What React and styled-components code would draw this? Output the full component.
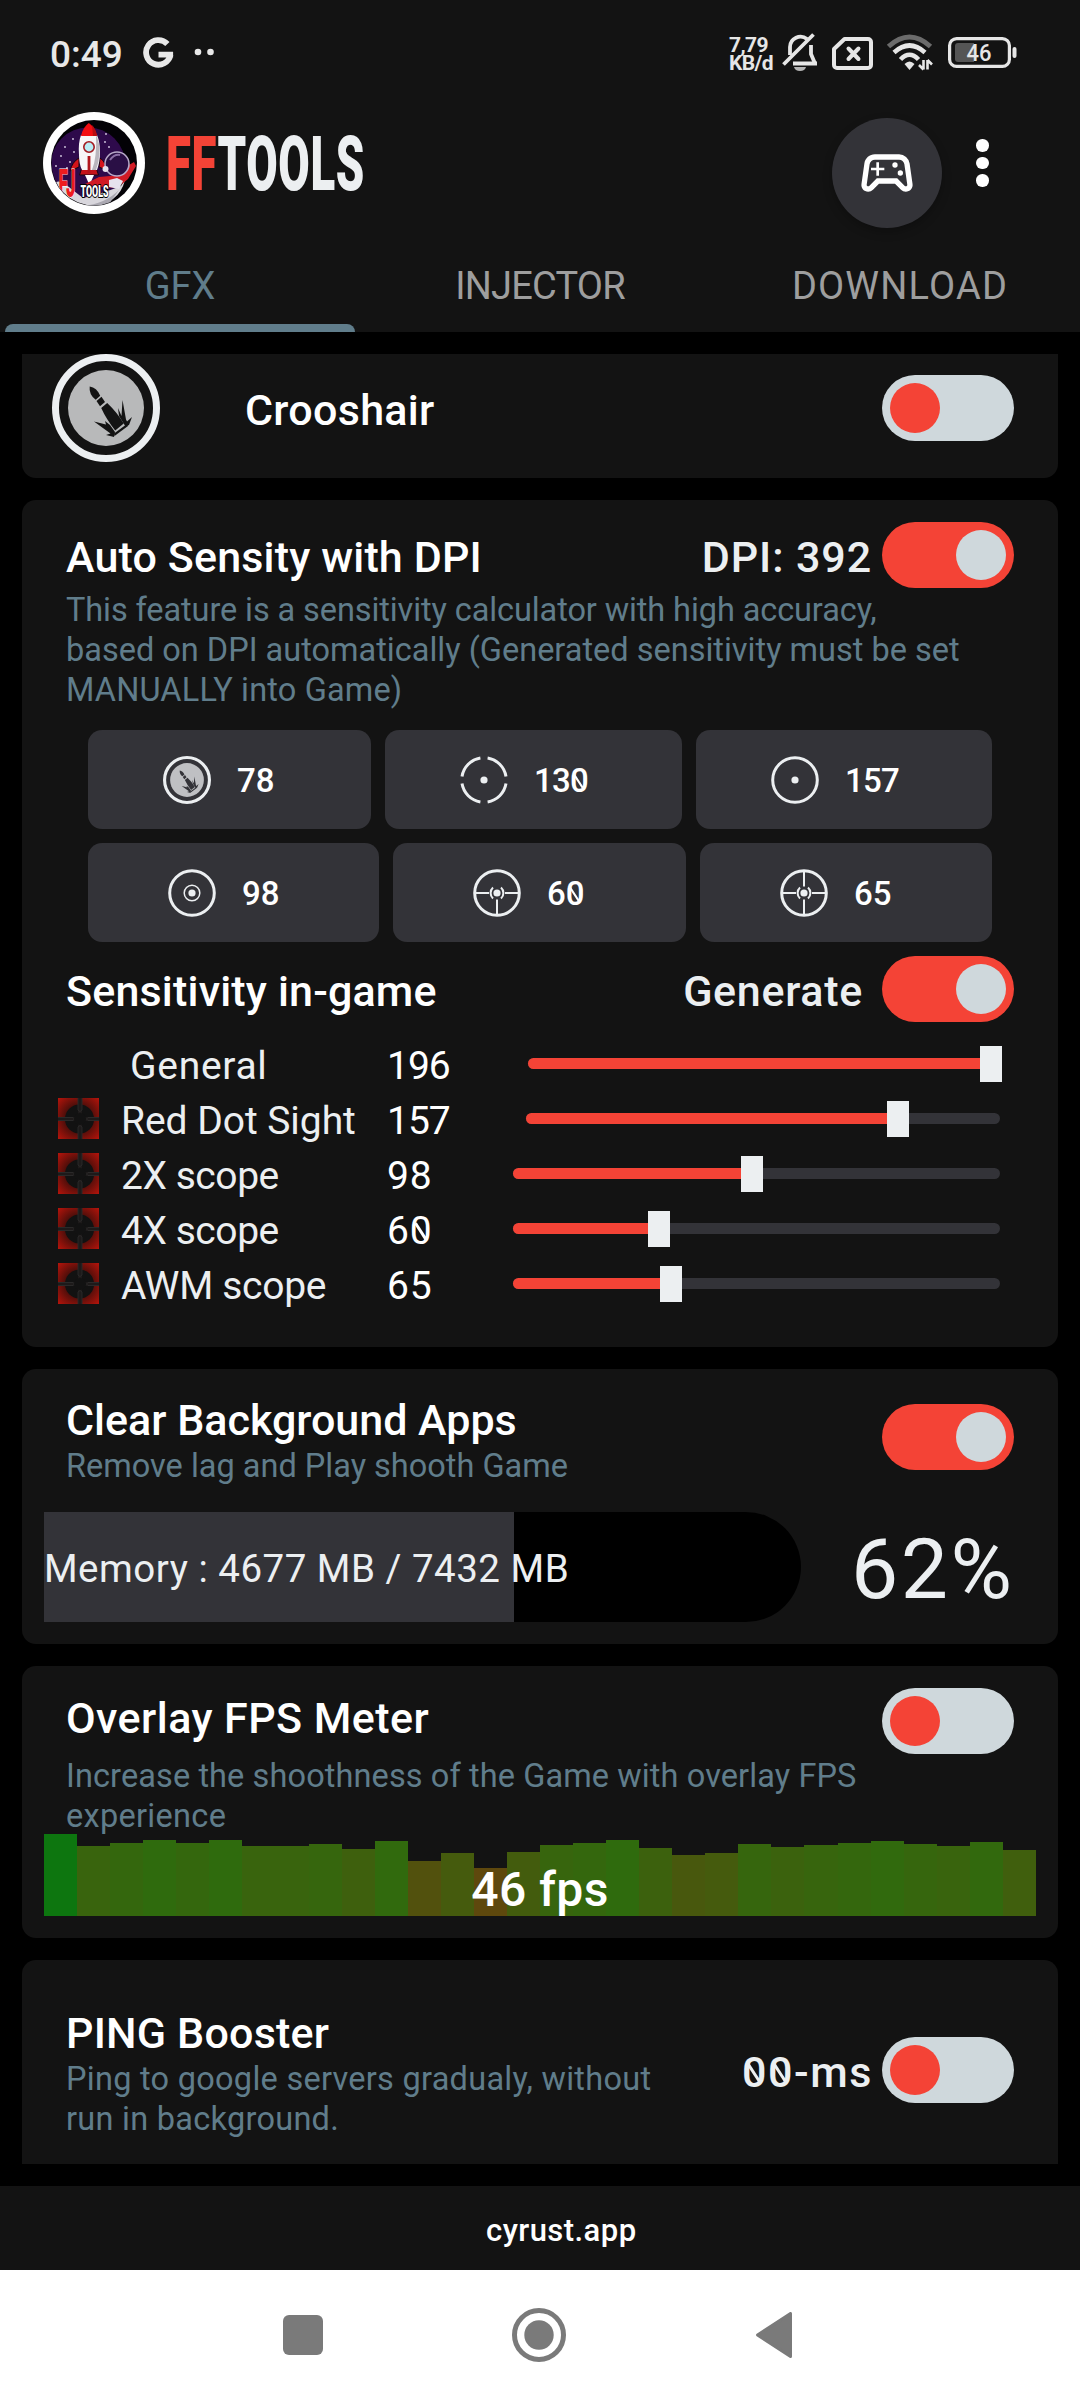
import React from "react";
import styled, { createGlobalStyle, css } from "styled-components";
import { MdOutlineSportsEsports } from "react-icons/md";

const c = {
  panel: "#131313",
  chip: "#333338",
  accent: "#f44336",
  light: "#cfd8dc",
  text: "#eceff1",
  muted: "#607d8b",
};

const Global = createGlobalStyle`
  * { box-sizing: border-box; }
  body { margin: 0; background: #000; font-family: Roboto, "Liberation Sans", sans-serif; }
  svg { display: block; flex: none; }
`;

const Screen = styled.div`
  width: 1080px;
  height: 2400px;
  display: flex;
  flex-direction: column;
  background: #000;
  overflow: hidden;
`;

/* ---------- text ---------- */
const Text = styled.span`
  display: block;
  white-space: pre;
  font-size: ${(p) => p.$size || 43}px;
  font-weight: ${(p) => p.$weight || 400};
  line-height: ${(p) => p.$line || 50}px;
  letter-spacing: ${(p) => p.$track || 0}px;
  color: ${(p) => p.$color || "#fff"};
`;
const Zero = styled.span`
  position: relative;
  display: inline-block;
  &::after {
    content: "";
    position: absolute;
    left: 50%;
    top: 50%;
    width: 0.075em;
    height: 0.52em;
    margin-left: ${(p) => -(p.$track || 0) / 2}px;
    background: currentColor;
    transform: translate(-50%, -46%) rotate(-33deg);
  }
`;
const Digits = ({ value, track }) =>
  String(value)
    .split("")
    .map((ch, i) => (ch === "0" ? <Zero key={i} $track={track}>0</Zero> : ch));

/* ---------- header ---------- */
const Header = styled.header`
  height: 332px;
  flex: none;
  background: ${c.panel};
  display: flex;
  flex-direction: column;
`;
const StatusBar = styled.div`
  height: 104px;
  padding: 0 62px 0 50px;
  display: flex;
  align-items: center;
  color: ${c.text};
`;
const StatusIcons = styled.div`
  margin-left: auto;
  display: flex;
  align-items: center;
`;
const Speed = styled.div`
  width: 42px;
  margin: 4px 11px 0 0;
  font-size: 21px;
  line-height: 18.5px;
  font-weight: 700;
  white-space: nowrap;
  letter-spacing: -0.6px;
  color: #e6e6e6;
`;
const Spaced = styled.div`
  margin-left: ${(p) => p.$left || 0}px;
  margin-top: ${(p) => p.$top || 0}px;
`;
const AppBar = styled.div`
  height: 136px;
  padding: 0 0 0 43px;
  display: flex;
  align-items: flex-start;
`;
const LogoWrap = styled.div`
  margin-top: 8px;
`;
const Brand = styled.h1`
  margin: 16px 0 0 21px;
  width: 421px;
  font-size: 76px;
  line-height: 88px;
  font-weight: 900;
  letter-spacing: 1px;
  color: ${c.text};
  transform: scaleX(0.6);
  transform-origin: 0 50%;
  em {
    font-style: normal;
    color: ${c.accent};
  }
`;
const GameButton = styled.button`
  width: 110px;
  height: 110px;
  margin: 14px 0 0 245px;
  padding: 0;
  border: 0;
  border-radius: 50%;
  background: ${c.chip};
  color: #fff;
  display: flex;
  align-items: center;
  justify-content: center;
  box-shadow: 0 4px 10px rgba(0, 0, 0, 0.25);
`;
const Menu = styled.div`
  margin: 35px 0 0 34px;
  display: flex;
  flex-direction: column;
  gap: 5px;
`;
const Dot = styled.i`
  width: 12.5px;
  height: 12.5px;
  border-radius: 50%;
  background: #fff;
`;
const Tabs = styled.nav`
  flex: 1;
  display: grid;
  grid-template-columns: 360px 360px 360px;
`;
const Tab = styled.div`
  display: flex;
  flex-direction: column;
  align-items: center;
  justify-content: space-between;
  padding-top: 22px;
`;
const Indicator = styled.div`
  width: 350px;
  height: 8px;
  border-radius: 8px 8px 0 0;
  background: ${c.muted};
`;

/* ---------- cards ---------- */
const Content = styled.main`
  height: 1854px;
  flex: none;
  padding: 22px;
  display: flex;
  flex-direction: column;
  gap: 22px;
`;
const Card = styled.section`
  height: ${(p) => p.$h}px;
  flex: none;
  background: ${c.panel};
  border-radius: ${(p) => p.$radius || "14px"};
  padding: ${(p) => (p.$pad === undefined ? 22 : p.$pad)}px 22px 0;
`;
const Row = styled.div`
  height: ${(p) => p.$h || 66}px;
  padding: 0 22px;
  margin-top: ${(p) => p.$top || 0}px;
  display: flex;
  align-items: ${(p) => p.$align || "center"};
`;
const Label = styled.div`
  padding-top: ${(p) => (p.$drop === undefined ? 4 : p.$drop)}px;
  padding-bottom: ${(p) => p.$lift || 0}px;
  margin-left: ${(p) => p.$left || 0}px;
`;
const Push = styled.div`
  margin-left: auto;
  padding: 4px ${(p) => p.$gap || 0}px 0 0;
`;
const Track = styled.div`
  width: 132px;
  height: 66px;
  flex: none;
  padding: 8px;
  border-radius: 33px;
  display: flex;
  justify-content: ${(p) => (p.$on ? "flex-end" : "flex-start")};
  background: ${(p) => (p.$on ? c.accent : c.light)};
  ${(p) => p.$end && css`margin-left: auto;`}
`;
const Knob = styled.div`
  width: 50px;
  height: 50px;
  border-radius: 50%;
  background: ${(p) => (p.$on ? c.light : c.accent)};
`;
const Toggle = ({ on, end }) => (
  <Track $on={on} $end={end}>
    <Knob $on={on} />
  </Track>
);
const Desc = styled.div`
  padding: 0 22px;
  margin-top: ${(p) => p.$top || 0}px;
`;

/* ---------- scope chips ---------- */
const ChipRow = styled.div`
  display: grid;
  grid-template-columns: ${(p) => p.$cols};
  gap: 14px;
  margin: ${(p) => p.$top}px 44px 0;
`;
const Chip = styled.div`
  height: 99px;
  padding-left: ${(p) => p.$left}px;
  border-radius: 14px;
  background: ${c.chip};
  display: flex;
  align-items: center;
  gap: 26px;
`;

/* ---------- sliders ---------- */
const SliderList = styled.div`
  margin-top: 14px;
`;
const SliderRow = styled.div`
  height: 55px;
  padding-left: 14px;
  display: flex;
  align-items: center;
`;
const Cell = styled.div`
  width: ${(p) => p.$w}px;
  padding-top: ${(p) => p.$drop || 0}px;
`;
const Rail = styled.div`
  position: relative;
  width: ${(p) => p.$w}px;
  height: 11px;
  border-radius: 6px;
  background: ${c.chip};
`;
const Fill = styled.div`
  height: 100%;
  border-radius: 6px 0 0 6px;
  background: ${c.accent};
`;
const Thumb = styled.div`
  position: absolute;
  top: -12px;
  width: 22px;
  height: 36px;
  margin-left: -11px;
  background: ${c.text};
`;

/* ---------- memory ---------- */
const Memory = styled.div`
  margin-top: 21px;
  display: flex;
  align-items: center;
`;
const MemBar = styled.div`
  width: 757px;
  height: 110px;
  border-radius: 0 55px 55px 0;
  display: flex;
  align-items: center;
  padding-top: 4px;
  background: linear-gradient(90deg, ${c.chip} 62.1%, #000 62.1%);
`;

/* ---------- fps chart ---------- */
const Chart = styled.div`
  position: relative;
  height: 82px;
  margin-top: -2px;
  display: flex;
  align-items: flex-end;
`;
const Bar = styled.div`
  flex: 1;
`;
const FpsLabel = styled.div`
  position: absolute;
  inset: 0;
  display: flex;
  justify-content: center;
  padding-top: 28px;
`;

const Footer = styled.footer`
  height: 84px;
  flex: none;
  padding: 23px 0 0 486px;
  background: ${c.panel};
`;
const NavBar = styled.div`
  height: 130px;
  flex: none;
  background: #fff;
  display: flex;
  align-items: center;
  padding: 0 0 0 283px;
`;

/* ---------- drawings ---------- */
const BulletCircle = ({ size, ring, bg, ink }) => (
  <svg width={size} height={size} viewBox="0 0 108 108">
    <circle cx="54" cy="54" r={54 - ring / 2} fill="none" stroke={c.text} strokeWidth={ring} />
    <circle cx="54" cy="54" r="38" fill={bg} />
    <g fill={ink}>
      <path d="M37.700 32.500q7 1 10.500 9.200l-4.500 4q-7-5-6-13.200z" />
      <path d="M44.500 47l5-4.200 3.500 5.200-5 4.200z" />
      <path d="M49.200 54l6-5q10 9.500 16.500 20.500l-8.500 7q-9-11.500-14-22.500z" />
      <path d="M67 62l-1-8 3.500 8 1-16 3.500 19.500 1 2 5-4.500-3 8-3.500 1.500z" />
      <path d="M42 67.500l12 3-1-3.500 5 4 5 7-1 5-8-2 4.500-1.500z" />
      <path d="M62 79.500l13-9.500 1 2-13.500 10z" />
    </g>
  </svg>
);

const Reticle = ({ kind }) => {
  if (kind === "bullet") return <BulletCircle size={48} ring={7} bg="#bfc0c3" ink={c.chip} />;
  return (
    <svg width="48" height="48" viewBox="0 0 48 48" fill="none" stroke={c.text}>
      {kind === "dashed" ? (
        <path
          strokeWidth="3"
          d="M27.600 2a22.300 22.300 0 0 1 18.400 18.400M46 27.600a22.300 22.300 0 0 1-18.400 18.400M20.400 46a22.300 22.300 0 0 1-18.400-18.400M2 20.400a22.300 22.300 0 0 1 18.400-18.400"
        />
      ) : (
        <circle cx="24" cy="24" r="22.300" strokeWidth="3" />
      )}
      <circle cx="24" cy="24" r="3.600" fill={c.text} stroke="none" />
      {kind === "double" && <circle cx="24" cy="24" r="7.800" strokeWidth="1.500" />}
      {(kind === "three" || kind === "four") && (
        <g strokeWidth="2">
          <path d="M2 24h14M32 24h14M24 30.500V46" />
          <path d="M20 18.500a7.500 7.500 0 0 0 0 11M28 18.500a7.500 7.500 0 0 1 0 11" />
          {kind === "four" && <path d="M24 2v15.500" />}
        </g>
      )}
    </svg>
  );
};

const ScopeTile = () => (
  <svg width="41" height="41" viewBox="0 0 41 41">
    <defs>
      <radialGradient id="tile" cx="50%" cy="50%" r="70%">
        <stop offset="0.450" stopColor="#4a0e0a" />
        <stop offset="1" stopColor="#b5140b" />
      </radialGradient>
    </defs>
    <rect width="41" height="41" fill="url(#tile)" />
    <circle cx="21.500" cy="21" r="14.500" fill="#121212" />
    <path d="M22 0v41M0 21h41" stroke="#1d1a1a" strokeWidth="4" />
    <path
      d="M20 0v12q2 3 4 0V0M20 41V29q2-3 4 0v12M0 19.500h15q3 1.500 0 3H0M41 19.500H30q-3 1.500 0 3h11"
      fill="none"
      stroke="#2b2b2b"
      strokeWidth="0.900"
    />
    <circle cx="22" cy="21" r="6" fill="#121212" />
  </svg>
);

const stars = [[22, 35], [18, 44], [27, 50], [30, 27], [63, 22], [66, 35], [24, 56], [13, 54], [31, 40], [62, 30]];
const Logo = () => (
  <svg width="102" height="102" viewBox="0 0 102 102">
    <circle cx="51" cy="51" r="51" fill="#fff" />
    <circle cx="51" cy="51" r="43" fill="#030206" />
    <clipPath id="disc"><circle cx="51" cy="51" r="42.500" /></clipPath>
    <g clipPath="url(#disc)">
      <circle cx="45" cy="53" r="37.500" fill="#2e0a4b" />
      {stars.map(([x, y]) => (
        <circle key={`${x}-${y}`} cx={x} cy={y} r="0.900" fill="#d9cfe6" />
      ))}
      <path d="M8 72q8-5 14 0l18 14q18-4 38-12l4-6q-6 24-34 26-26 0-40-22z" fill="#d8d6dc" />
      <path d="M40 94q22-2 36-16l-10 14-14 4z" fill="#a9a7b0" />
      <path d="M36 46q-7 4-9 13l9-4zM57 46q6 4 6 12l-7-3z" fill="#d5141a" stroke="#180612" strokeWidth="1" />
      <path d="M38.500 57h15l2 6h-19z" fill="#c5131a" stroke="#180612" strokeWidth="1" />
      <path d="M42 63h9l-4.500 10z" fill="#fff" />
      <path d="M38 23q-3 8-2 20 0 9 3 15h15q3-8 3-18 0-10-3-17z" fill="#f7f5f7" />
      <path d="M53 23q4 8 3.500 18-.5 9-3.500 17h-4q5-12 4-35z" fill="#b9b5bd" />
      <path d="M38 24q2-9 7.800-13Q52 15 54 24z" fill="#f20d12" />
      <path d="M49 13q4 4 5 11h-4z" fill="#b70c12" />
      <circle cx="46" cy="35" r="5.200" fill="#b9ecf5" stroke="#a31c22" strokeWidth="1.600" />
      <path d="M46 44v17" stroke="#b1151c" strokeWidth="2.800" />
      <path d="M42 72l14-7 22-2 8-10 5-3 2 4-8 13-11 9-24-2z" fill="#d01b25" />
      <path d="M66 68l8-2 6 3-4 8-10-2z" fill="#e6e2ee" />
      <circle cx="74" cy="52" r="12" fill="#2a0f45" stroke="#b7a8c8" strokeWidth="1.600" />
      <path d="M67 48q4-6 10-5" stroke="#8a6da5" strokeWidth="2" fill="none" />
      <circle cx="62.500" cy="57" r="3" fill="#e4e0ea" />
      <text x="15.500" y="85" fontSize="39" fontWeight="900" fill="#ee1c1f" stroke="#fff" strokeWidth="0.800" paintOrder="stroke" textLength="17" lengthAdjust="spacingAndGlyphs">FJ</text>
      <text x="37.500" y="85" fontSize="16" fontWeight="900" fill="#fff" stroke="#000" strokeWidth="2" paintOrder="stroke" textLength="28" lengthAdjust="spacingAndGlyphs">TOOLS</text>
    </g>
  </svg>
);

const GMark = () => (
  <svg width="31" height="31" viewBox="0 0 31 31" fill="none" stroke="#e8e8e8" strokeWidth="5.800">
    <path d="M24.400 7A12.300 12.300 0 1 0 27.500 17.700M15.500 17.700h14.600" />
  </svg>
);
const BellOff = () => (
  <svg width="36" height="40" viewBox="0 0 36 40">
    <g fill="none" stroke="#e6e6e6" strokeWidth="3.800">
      <path d="M8 23v-8a10.500 10.500 0 0 1 17-8M29 13v9l4 9.500" />
      <path d="M11 31.500h24M1.500 32.500L31.500 2.500" />
    </g>
    <path d="M12 35h12q-1 4-6 4t-6-4z" fill="#b5b5b5" />
  </svg>
);
const SimOff = () => (
  <svg width="41" height="33" viewBox="0 0 41 33" fill="none" stroke="#e6e6e6">
    <path d="M12.500 2H36a3 3 0 0 1 3 3v23a3 3 0 0 1-3 3H5a3 3 0 0 1-3-3V12z" strokeWidth="4" strokeLinejoin="round" />
    <path d="M16.500 11.500l10 10.500M26.500 11.500l-10 10.500" strokeWidth="4" strokeLinecap="round" />
  </svg>
);
const Wifi = () => (
  <svg width="48" height="37" viewBox="0 0 48 37" fill="none">
    <path d="M2.500 12.500Q23.500-6.500 44.500 12.500" stroke="#6b6b6b" strokeWidth="5" />
    <path d="M8 18.500Q23.500 4.500 39 18.500M14.500 25.500Q23.500 16 32.500 25.500" stroke="#e6e6e6" strokeWidth="4.600" />
    <path d="M18.500 30q5-5 10 0l-5 6z" fill="#e6e6e6" />
    <path d="M37.500 26v9.500M41.500 35.500V26M33 31l4.500 4.500M41.500 26l4.500 4.500" stroke="#e6e6e6" strokeWidth="2.600" />
  </svg>
);
const Battery = () => (
  <svg width="70" height="31" viewBox="0 0 70 31">
    <rect x="1.600" y="1.600" width="59.800" height="27.800" rx="7" fill="none" stroke="#e6e6e6" strokeWidth="3.200" />
    <path d="M10 6h16v19H10a3 3 0 0 1-3-3V9a3 3 0 0 1 3-3z" fill="#555" />
    <rect x="64.500" y="10" width="4" height="11" rx="2" fill="#e6e6e6" />
    <text x="31" y="24" fontSize="23" fontWeight="500" fill="#e6e6e6" textAnchor="middle" textLength="25" lengthAdjust="spacingAndGlyphs">46</text>
  </svg>
);

/* ---------- data ---------- */
const chipRows = [
  { cols: "283px 297px 296px", left: 75, top: 20, items: [["bullet", 78], ["dashed", 130], ["dot", 157]] },
  { cols: "291px 293px 292px", left: 80, top: 14, items: [["double", 98], ["three", 60], ["four", 65]] },
];
const sliders = [
  { name: "General", value: 196, icon: false, rail: 472, track: 0.7 },
  { name: "Red Dot Sight", value: 157, icon: true, rail: 474, track: -0.05 },
  { name: "2X scope", value: 98, icon: true, rail: 487, track: -0.45 },
  { name: "4X scope", value: 60, icon: true, rail: 487, track: -0.45 },
  { name: "AWM scope", value: 65, icon: true, rail: 487, track: -0.3 },
];
const bars = [82, 70, 73, 76, 73, 76, 70, 70, 72, 67, 75, 55, 63, 48, 64, 71, 73, 76, 68, 61, 63, 72, 69, 71, 73, 75, 72, 70, 74, 66];
const barColor = (h) => {
  if (h > 80) return "rgb(13,118,15)";
  const t = (76 - h) / 28;
  return `rgb(${Math.round(47 + 47 * t)},${Math.round(107 - 35 * t)},13)`;
};

const muted = { $size: 32.5, $line: 40, $color: c.muted };
const title = { $weight: 500 };
const side = { $weight: 500, $color: c.text };
const tab = { $size: 38, $line: 48 };

export default function App() {
  return (
    <Screen>
      <Global />
      <Header>
        <StatusBar>
          <Spaced $top={5}><Text $size={37} $line={44} $weight={500} $color="#e8e8e8">0:49</Text></Spaced>
          <Spaced $left={20}><GMark /></Spaced>
          <Spaced $left={20}>
            <svg width="22" height="8" viewBox="0 0 22 8" fill="#e8e8e8"><circle cx="4" cy="4" r="3.300" /><circle cx="16.500" cy="4" r="3.300" /></svg>
          </Spaced>
          <StatusIcons>
            <Speed>7,79<br />KB/d</Speed>
            <BellOff />
            <Spaced $left={14} $top={3}><SimOff /></Spaced>
            <Spaced $left={13} $top={1}><Wifi /></Spaced>
            <Spaced $left={14}><Battery /></Spaced>
          </StatusIcons>
        </StatusBar>
        <AppBar>
          <LogoWrap><Logo /></LogoWrap>
          <Brand><em>FF</em>TOOLS</Brand>
          <GameButton><MdOutlineSportsEsports size={64} /></GameButton>
          <Menu><Dot /><Dot /><Dot /></Menu>
        </AppBar>
        <Tabs>
          <Tab><Text {...tab} $color={c.muted}>GFX</Text><Indicator /></Tab>
          <Tab><Text {...tab} $track={-0.8} $color="#9e9e9e">INJECTOR</Text></Tab>
          <Tab><Text {...tab} $track={1.2} $color="#9e9e9e">DOWNLOAD</Text></Tab>
        </Tabs>
      </Header>

      <Content>
        <Card $h={124} $pad={0} $radius="0 0 14px 14px">
          <Row $h={108}>
            <Spaced $left={-14}><BulletCircle size={108} ring={7} bg="#b8b9ba" ink={c.panel} /></Spaced>
            <Label $left={85}><Text {...title} $track={0.3}>Crooshair</Text></Label>
            <Toggle end />
          </Row>
        </Card>

        <Card $h={847}>
          <Row>
            <Label><Text {...title} $track={0.15}>Auto Sensity with DPI</Text></Label>
            <Push $gap={10}><Text {...side} $track={0.9}>DPI: 392</Text></Push>
            <Toggle on />
          </Row>
          <Desc $top={2}>
            <Text {...muted} $track={-0.1}>This feature is a sensitivity calculator with high accuracy,</Text>
            <Text {...muted}>based on DPI automatically (Generated sensitivity must be set</Text>
            <Text {...muted} $track={0.15}>MANUALLY into Game)</Text>
          </Desc>
          {chipRows.map((row) => (
            <ChipRow key={row.left} $cols={row.cols} $top={row.top}>
              {row.items.map(([kind, value]) => (
                <Chip key={kind} $left={row.left}>
                  <Reticle kind={kind} />
                  <Label $drop={3}>
                    <Text $size={33} $line={38} $weight={500} $track={value > 99 ? -0.8 : 0}><Digits value={value} /></Text>
                  </Label>
                </Chip>
              ))}
            </ChipRow>
          ))}
          <Row $top={14}>
            <Label><Text {...title} $track={0.18}>Sensitivity in-game</Text></Label>
            <Push $gap={19}><Text {...side} $track={0.7}>Generate</Text></Push>
            <Toggle on />
          </Row>
          <SliderList>
            {sliders.map((s) => (
              <SliderRow key={s.name}>
                <Cell $w={s.icon ? 63 : 72}>{s.icon && <ScopeTile />}</Cell>
                <Cell $w={s.icon ? 266 : 257} $drop={5}><Text $size={39} $line={48} $track={s.track} $color={c.text}>{s.name}</Text></Cell>
                <Cell $w={613 - s.rail} $drop={5}><Text $size={39} $line={48} $track={s.value > 99 ? -1 : 0.8}><Digits value={s.value} track={0.8} /></Text></Cell>
                <Rail $w={s.rail}>
                  <Fill style={{ width: `${s.value / 2}%` }} />
                  <Thumb style={{ left: `${s.value / 2}%` }} />
                </Rail>
              </SliderRow>
            ))}
          </SliderList>
        </Card>

        <Card $h={275}>
          <Row $h={100} $align="flex-start">
            <Label>
              <Text {...title}>Clear Background Apps</Text>
              <Text {...muted} $line={42}>Remove lag and Play shooth Game</Text>
            </Label>
            <Push>
              <Spaced $top={9}><Toggle on /></Spaced>
            </Push>
          </Row>
          <Memory>
            <MemBar><Text $size={38.5} $track={0.5} $color={c.text}>Memory : 4677 MB / 7432 MB</Text></MemBar>
            <Spaced $left={50} $top={6}><Text $size={84} $line={90} $track={2.5} $color={c.text}>62%</Text></Spaced>
          </Memory>
        </Card>

        <Card $h={272}>
          <Row>
            <Label $drop={0} $lift={7}><Text {...title} $track={0.45}>Overlay FPS Meter</Text></Label>
            <Toggle end />
          </Row>
          <Desc $top={2}>
            <Text {...muted} $track={0.1}>Increase the shoothness of the Game with overlay FPS</Text>
            <Text {...muted} $track={0.3}>experience</Text>
          </Desc>
          <Chart>
            {bars.map((h, i) => <Bar key={i} style={{ height: h, background: barColor(h) }} />)}
            <FpsLabel><Text $size={48} $line={56} $weight={500} $track={0.4}>46 fps</Text></FpsLabel>
          </Chart>
        </Card>

        <Card $h={204} $radius="14px 14px 0 0">
          <Row $h={176}>
            <Label $drop={6}>
              <Text {...title} $line={51} $track={0.2}>PING Booster</Text>
              <Text {...muted} $track={0.27}>Ping to google servers gradualy, without</Text>
              <Text {...muted} $track={0.27}>run in background.</Text>
            </Label>
            <Push $gap={9}><Text {...side} $track={1.6}><Digits value="00-ms" track={1.6} /></Text></Push>
            <Toggle />
          </Row>
        </Card>
      </Content>

      <Footer><Text $size={31} $line={43} $weight={500} $track={0.45}>cyrust.app</Text></Footer>
      <NavBar>
        <svg width="40" height="40"><rect width="40" height="40" rx="6" fill="#7a7a7a" /></svg>
        <Spaced $left={189}>
          <svg width="54" height="54" viewBox="0 0 54 54"><circle cx="27" cy="27" r="24.500" fill="none" stroke="#7a7a7a" strokeWidth="5" /><circle cx="27" cy="27" r="14.700" fill="#7a7a7a" /></svg>
        </Spaced>
        <Spaced $left={189}>
          <svg width="38" height="46" viewBox="0 0 38 46"><path d="M35.500 1.500v43L2.500 23z" fill="#7a7a7a" stroke="#7a7a7a" strokeWidth="3" strokeLinejoin="round" /></svg>
        </Spaced>
      </NavBar>
    </Screen>
  );
}
